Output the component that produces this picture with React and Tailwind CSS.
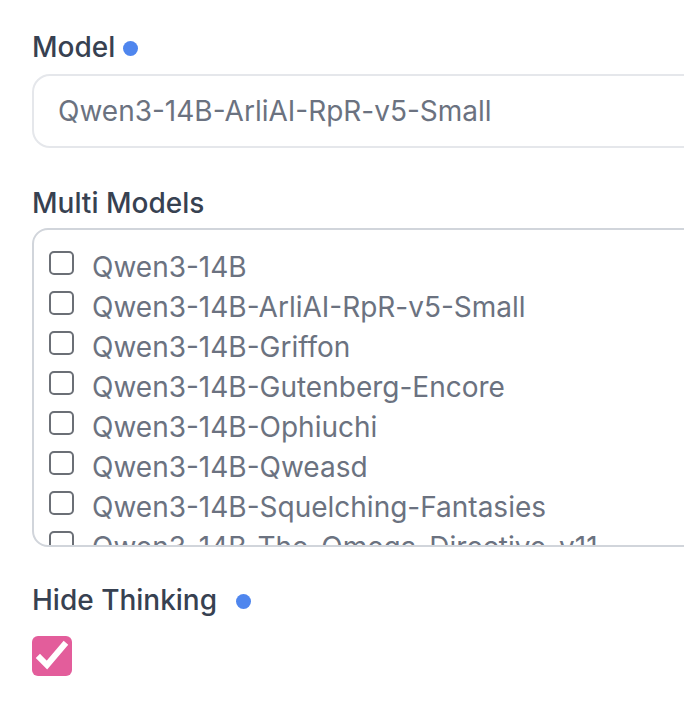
import React from "react";

const models = [
  "Qwen3-14B",
  "Qwen3-14B-ArliAI-RpR-v5-Small",
  "Qwen3-14B-Griffon",
  "Qwen3-14B-Gutenberg-Encore",
  "Qwen3-14B-Ophiuchi",
  "Qwen3-14B-Qweasd",
  "Qwen3-14B-Squelching-Fantasies",
  "Qwen3-14B-The-Omega-Directive-v11",
  "Qwen3-14B-Uncensored",
];

const Dot = ({ className }) => (
  <span className={`inline-block w-[15px] h-[15px] rounded-full bg-[#4f86ee] ${className}`} />
);

const App = () => {
  const [selected, setSelected] = React.useState([]);
  const [hideThinking, setHideThinking] = React.useState(true);

  const toggle = (name) => {
    setSelected((prev) =>
      prev.includes(name) ? prev.filter((m) => m !== name) : [...prev, name]
    );
  };

  return (
    <div
      className="w-[684px] h-[702px] overflow-hidden bg-white pl-[32px] pt-[27px]"
      style={{ fontFamily: "Inter, 'Noto Sans', sans-serif" }}
    >
      <div className="w-[720px]">
        <div className="flex items-center text-[28px] leading-[40px] font-medium text-[#374151]">
          Model
          <Dot className="ml-[8px] mt-[3px]" />
        </div>

        <div className="mt-[7px] h-[74px] border-2 border-[#e5e7eb] rounded-[18px] flex items-center pl-[24px] text-[28px] text-[#6b7280]">
          Qwen3-14B-ArliAI-RpR-v5-Small
        </div>

        <div className="mt-[35px] text-[28px] leading-[40px] font-medium text-[#374151]">
          Multi Models
        </div>

        <div className="mt-[5px] h-[319px] border-2 border-[#d1d5db] rounded-[16px] overflow-hidden pl-[15px] pt-[17px]">
          {models.map((name) => (
            <label
              key={name}
              className="flex items-start gap-[18px] text-[28px] leading-[40px] text-[#6b7280] cursor-pointer"
            >
              <span
                onClick={() => toggle(name)}
                className={`mt-[4px] w-[25px] h-[24px] shrink-0 rounded-[5px] border-2 border-[#6b6f76] ${
                  selected.includes(name) ? "bg-[#e35d9b] border-[#e35d9b]" : "bg-white"
                }`}
              />
              <span className="whitespace-nowrap">{name}</span>
            </label>
          ))}
        </div>

        <div className="mt-[33px] flex items-center text-[28px] leading-[40px] font-medium text-[#374151]">
          Hide Thinking
          <Dot className="ml-[19px] mt-[3px]" />
        </div>

        <button
          type="button"
          onClick={() => setHideThinking(!hideThinking)}
          className={`mt-[16px] w-[40px] h-[40px] rounded-[6px] flex items-center justify-center ${
            hideThinking ? "bg-[#e35d9b]" : "bg-white border-2 border-[#6b6f76]"
          }`}
        >
          {hideThinking && (
            <svg width="40" height="40" viewBox="0 0 40 40">
              <path
                d="M8 22 L15 29 L32 9"
                fill="none"
                stroke="white"
                strokeWidth="6"
                strokeLinecap="square"
              />
            </svg>
          )}
        </button>
      </div>
    </div>
  );
};

export default App;
